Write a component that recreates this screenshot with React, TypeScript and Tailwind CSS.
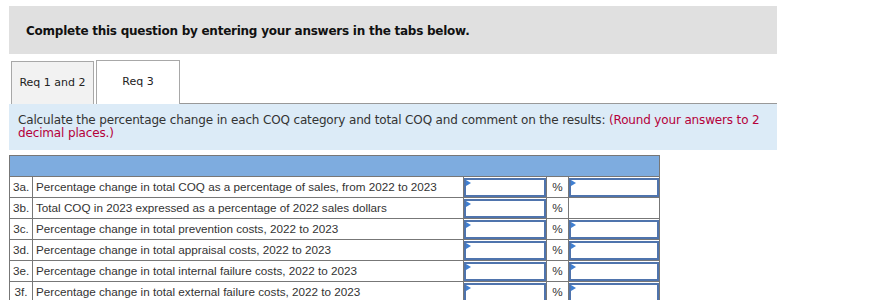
const rows = [
  { id: '3a.', text: 'Percentage change in total COQ as a percentage of sales, from 2022 to 2023', comment: true },
  { id: '3b.', text: 'Total COQ in 2023 expressed as a percentage of 2022 sales dollars', comment: false },
  { id: '3c.', text: 'Percentage change in total prevention costs, 2022 to 2023', comment: true },
  { id: '3d.', text: 'Percentage change in total appraisal costs, 2022 to 2023', comment: true },
  { id: '3e.', text: 'Percentage change in total internal failure costs, 2022 to 2023', comment: true },
  { id: '3f.', text: 'Percentage change in total external failure costs, 2022 to 2023', comment: true },
];

const InputBox = () => (
  <div className="relative h-[19px] border-2 border-[#4f74ad] bg-white">
    <span className="absolute left-0 top-0 w-0 h-0 border-t-[3px] border-b-[3px] border-l-[5px] border-t-transparent border-b-transparent border-l-[#3f7fd1]" />
  </div>
);

const App = () => {
  return (
    <div className="w-[891px] h-[300px] overflow-hidden bg-white pt-[6px] pl-[9px]">
      <div className="w-[768px] h-[48px] bg-[#e0e0e0] pl-[17px] pt-[16px]">
        <p className="font-['DejaVu_Sans',sans-serif] font-bold text-[12px] tracking-[-0.25px] text-[#111]">
          Complete this question by entering your answers in the tabs below.
        </p>
      </div>

      <div className="flex w-[768px] mt-[6px] items-end">
        <div className="ml-[2px] w-[83px] h-[43px] bg-[#f2f2f2] border border-b-0 border-[#a8a8a8] flex items-center justify-center font-['DejaVu_Sans',sans-serif] text-[11px] text-[#222]">
          Req 1 and 2
        </div>
        <div className="ml-[2px] w-[84px] h-[44px] bg-white border border-b-0 border-[#a8a8a8] flex items-center justify-center font-['DejaVu_Sans',sans-serif] text-[11px] text-[#222]">
          Req 3
        </div>
        <div className="flex-1 border-b border-[#999]" />
      </div>

      <div className="w-[768px] h-[46px] bg-[#dcebf7] px-[9px] pt-[10px] font-['DejaVu_Sans',sans-serif] text-[12px] tracking-[-0.15px] leading-[13px] text-[#333]">
        Calculate the percentage change in each COQ category and total COQ and comment on the results:{' '}
        <span className="text-[#b5003a]">(Round your answers to 2 decimal places.)</span>
      </div>

      <table className="mt-[5px] table-fixed border-collapse w-[650px] font-['Liberation_Sans',Arial,sans-serif] text-[11.7px] text-[#333]">
        <colgroup>
          <col className="w-[23px]" />
          <col className="w-[431px]" />
          <col className="w-[83px]" />
          <col className="w-[22px]" />
          <col className="w-[91px]" />
        </colgroup>
        <thead>
          <tr className="h-[21px] bg-[#7eacdf]">
            <th colSpan={5} className="border border-[#777]" />
          </tr>
        </thead>
        <tbody>
          {rows.map((r) => (
            <tr key={r.id} className="h-[21px]">
              <td className="border border-[#777] text-center px-0">{r.id}</td>
              <td className="border border-[#777] px-[3px]">{r.text}</td>
              <td className="border border-[#777] p-0">
                <InputBox />
              </td>
              <td className="border border-[#777] text-center">%</td>
              <td className="border border-[#777] p-0">{r.comment && <InputBox />}</td>
            </tr>
          ))}
        </tbody>
      </table>
    </div>
  );
};

export default App;
